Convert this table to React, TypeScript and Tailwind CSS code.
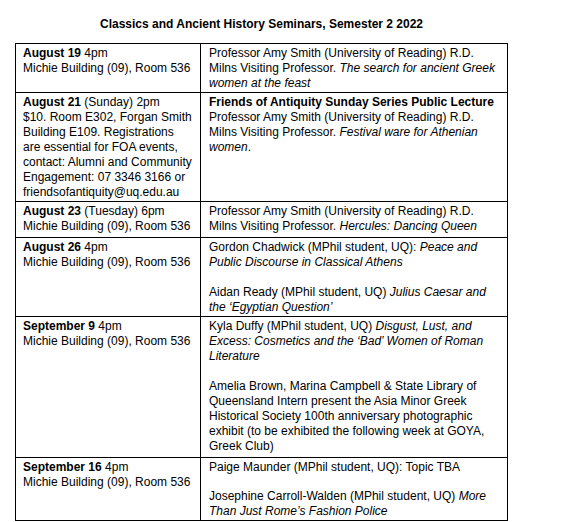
import React from 'react';

type Row = {
  when: React.ReactNode;
  what: React.ReactNode;
  extra?: boolean;
};

const michie = 'Michie Building (09), Room 536';

const rows: Row[] = [
  {
    when: (
      <>
        <b>August 19</b> 4pm<br />
        {michie}
      </>
    ),
    what: (
      <>
        Professor Amy Smith (University of Reading) R.D.<br />
        Milns Visiting Professor. <i>The search for ancient Greek</i><br />
        <i>women at the feast</i>
      </>
    ),
  },
  {
    when: (
      <>
        <b>August 21</b> (Sunday) 2pm<br />
        $10. Room E302, Forgan Smith<br />
        Building E109. Registrations<br />
        are essential for FOA events,<br />
        contact: Alumni and Community<br />
        Engagement: 07 3346 3166 or<br />
        friendsofantiquity@uq.edu.au
      </>
    ),
    what: (
      <>
        <b>Friends of Antiquity Sunday Series Public Lecture</b><br />
        Professor Amy Smith (University of Reading) R.D.<br />
        Milns Visiting Professor. <i>Festival ware for Athenian</i><br />
        <i>women</i>.
      </>
    ),
  },
  {
    when: (
      <>
        <b>August 23</b> (Tuesday) 6pm<br />
        {michie}
      </>
    ),
    what: (
      <>
        Professor Amy Smith (University of Reading) R.D.<br />
        Milns Visiting Professor. <i>Hercules: Dancing Queen</i>
      </>
    ),
    extra: true,
  },
  {
    when: (
      <>
        <b>August 26</b> 4pm<br />
        {michie}
      </>
    ),
    what: (
      <>
        <p>
          Gordon Chadwick (MPhil student, UQ): <i>Peace and</i><br />
          <i>Public Discourse in Classical Athens</i>
        </p>
        <p className="mt-[15px]">
          Aidan Ready (MPhil student, UQ) <i>Julius Caesar and</i><br />
          <i>the ‘Egyptian Question’</i>
        </p>
      </>
    ),
  },
  {
    when: (
      <>
        <b>September 9</b> 4pm<br />
        {michie}
      </>
    ),
    what: (
      <>
        <p>
          Kyla Duffy (MPhil student, UQ) <i>Disgust, Lust, and</i><br />
          <i>Excess: Cosmetics and the ‘Bad’ Women of Roman</i><br />
          <i>Literature</i>
        </p>
        <p className="mt-[15px]">
          Amelia Brown, Marina Campbell &amp; State Library of<br />
          Queensland Intern present the Asia Minor Greek<br />
          Historical Society 100th anniversary photographic<br />
          exhibit (to be exhibited the following week at GOYA,<br />
          Greek Club)
        </p>
      </>
    ),
    extra: true,
  },
  {
    when: (
      <>
        <b>September 16</b> 4pm<br />
        {michie}
      </>
    ),
    what: (
      <>
        <p>Paige Maunder (MPhil student, UQ): Topic TBA</p>
        <p className="mt-[14px]">
          Josephine Carroll-Walden (MPhil student, UQ) <i>More</i><br />
          <i>Than Just Rome’s Fashion Police</i>
        </p>
      </>
    ),
  },
];

export default function App() {
  return (
    <div className="w-[575px] h-[522px] bg-white text-black font-['Liberation_Sans',Arial,sans-serif] text-[12px] leading-[15px] overflow-hidden">
      <div className="ml-[15px] w-[493px] pt-[17px]">
        <h1 className="text-center font-bold mb-[11px]">
          Classics and Ancient History Seminars, Semester 2 2022
        </h1>
        <table className="w-full border-collapse border border-black table-fixed">
          <colgroup>
            <col className="w-[185px]" />
            <col />
          </colgroup>
          <tbody>
            {rows.map((row, i) => (
              <tr key={i}>
                <td
                  className={`border border-black align-top whitespace-nowrap px-[7px] pt-[2px] ${
                    row.extra ? 'pb-[3px]' : 'pb-px'
                  }`}
                >
                  {row.when}
                </td>
                <td
                  className={`border border-black align-top whitespace-nowrap px-[8px] pt-[2px] ${
                    row.extra ? 'pb-[3px]' : 'pb-px'
                  }`}
                >
                  {row.what}
                </td>
              </tr>
            ))}
          </tbody>
        </table>
      </div>
    </div>
  );
}
